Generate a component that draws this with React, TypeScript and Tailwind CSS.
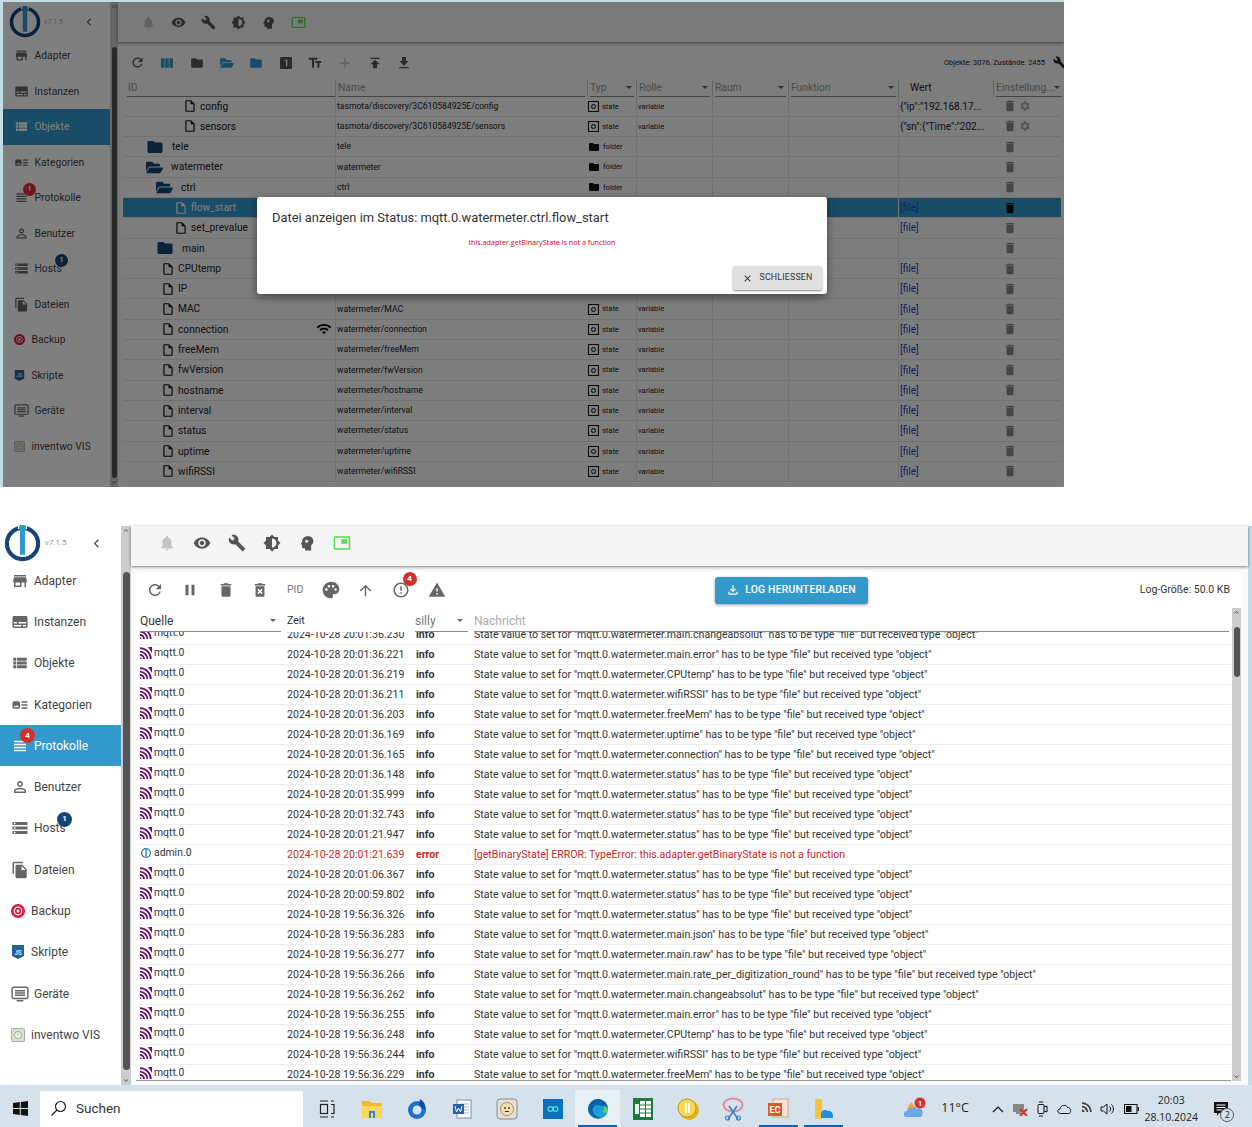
import type { ReactNode } from 'react';
import { FaFolderOpen } from 'react-icons/fa';
import {
  MdAdd, MdArrowUpward, MdArtTrack, MdBrightness6, MdBuild, MdChevronLeft, MdClose, MdDelete, MdDeleteForever,
  MdErrorOutline, MdFileCopy, MdFolder, MdGetApp, MdKeyboardArrowDown, MdKeyboardArrowUp, MdLooksOne,
  MdNotifications, MdOutlineFileDownload, MdOutlineInsertDriveFile, MdPalette, MdPause, MdPersonOutline,
  MdPictureInPicture, MdPublish, MdRefresh, MdSettings, MdStorage, MdStore, MdSubtitles, MdTextFields,
  MdViewColumn, MdViewHeadline, MdViewList, MdVisibility, MdWarning, MdWifi,
} from 'react-icons/md';

/* small drawn icons */

function Logo({ size }: { size: number }) {
  return (
    <svg width={size} height={size} viewBox="0 0 36 36" className="shrink-0">
      <circle cx="18" cy="18" r="15.2" fill="none" stroke="#164477" strokeWidth="4" />
      <rect x="15.5" y="0" width="5" height="29" fill="#3399cc" />
      <rect x="13.5" y="0" width="1.5" height="4" fill="#fff" />
      <rect x="21" y="0" width="1.5" height="4" fill="#fff" />
    </svg>
  );
}

function HeadIcon({ size }: { size: number }) {
  return (
    <svg width={size} height={size} viewBox="0 0 24 24">
      <path d="M13 3 C8.5 3 5.5 6 5.5 10 L3.5 14 H5.5 V17.5 C5.5 18.5 6.5 19 7.5 19 H9.5 V22 H17.5 V15 C19.5 13.5 20.5 11.5 20.5 9.5 C20.5 5.5 17.5 3 13 3 Z" fill="#555" />
      <circle cx="11.5" cy="9.5" r="2" fill="#f5f5f5" />
    </svg>
  );
}

function MqttIcon() {
  return (
    <svg width="12" height="12" viewBox="0 0 12 12" fill="none" stroke="#66106a" strokeWidth="1.8" className="shrink-0">
      <path d="M0 1.2 A11 11 0 0 1 10.8 12" />
      <path d="M0 4.6 A7.5 7.5 0 0 1 7.4 12" />
      <path d="M0 8 A4 4 0 0 1 4 12" />
      <path d="M0 11 L1.2 12" strokeWidth="2" />
      <path d="M8 0 L12 0 L12 6 Z" fill="#66106a" stroke="none" />
    </svg>
  );
}

function AdminIcon() {
  return (
    <svg width="12" height="12" viewBox="0 0 12 12" className="shrink-0">
      <circle cx="6" cy="6" r="4.4" fill="none" stroke="#2e6f9e" strokeWidth="1.3" />
      <rect x="5.2" y="1" width="1.6" height="8.5" fill="#3399cc" />
    </svg>
  );
}

function StateIcon() {
  return (
    <svg width="11" height="11" viewBox="0 0 11 11" className="shrink-0">
      <rect x="0.5" y="0.5" width="10" height="10" fill="none" stroke="#111" />
      <circle cx="5.5" cy="5.5" r="2" fill="none" stroke="#111" />
    </svg>
  );
}

function BackupIcon({ size }: { size: number }) {
  return (
    <svg width={size} height={size} viewBox="0 0 14 14">
      <circle cx="7" cy="7" r="7" fill="#e0173f" />
      <circle cx="7" cy="7" r="3.8" fill="none" stroke="#fff" strokeWidth="1.2" />
      <circle cx="7" cy="7" r="1.5" fill="#fff" />
    </svg>
  );
}

function ScriptIcon({ size }: { size: number }) {
  return (
    <svg width={size} height={size} viewBox="0 0 14 14">
      <path d="M1 0 H13 V11 L7 14 L1 11 Z" fill="#23609c" />
      <text x="7" y="9.5" textAnchor="middle" fontSize="6.5" fontWeight="700" fill="#dbe8f5" fontFamily="Roboto, sans-serif">JS</text>
    </svg>
  );
}

function DeviceIcon({ size }: { size: number }) {
  return (
    <svg width={size} height={size} viewBox="0 0 16 16" fill="none" stroke="#666" strokeWidth="1.3">
      <rect x="1" y="2" width="14" height="10" rx="1.2" />
      <path d="M3.5 5.2 H12.5 M3.5 7.2 H12.5 M3.5 9.2 H12.5 M5 14 H11" />
    </svg>
  );
}

function VisIcon({ size }: { size: number }) {
  return (
    <svg width={size} height={size} viewBox="0 0 14 14">
      <rect x="0.5" y="0.5" width="13" height="13" rx="1" fill="#dcdcdc" stroke="#aaa" />
      <circle cx="7" cy="7" r="3.6" fill="#eef5e4" stroke="#7cb342" strokeWidth="0.8" />
      <rect x="6.6" y="4.6" width="0.8" height="3" fill="#7cb342" />
    </svg>
  );
}

function ScrollTrack({ thumbTop, thumbBottom }: { thumbTop: string; thumbBottom: string }) {
  return (
    <div className="w-full h-full flex flex-col bg-[#cdcdcd]">
      <MdKeyboardArrowUp className="w-full h-[9px] shrink-0 text-[#555]" />
      <div className={`${thumbTop} ${thumbBottom} flex-1 mx-[1.5px] rounded-full bg-[#555]`} />
      <MdKeyboardArrowDown className="w-full h-[9px] shrink-0 text-[#555]" />
    </div>
  );
}

/* sidebar, same items in both shots */

type NavItem = { label: string; icon: (size: number) => ReactNode; tight?: boolean; active?: boolean; badge?: string; badgeNavy?: boolean };

const navItems = (protoBadge: string, activeLabel: string): NavItem[] => [
  { label: 'Adapter', icon: (s) => <MdStore size={s} color="#666" /> },
  { label: 'Instanzen', icon: (s) => <MdSubtitles size={s} color="#666" /> },
  { label: 'Objekte', icon: (s) => <MdViewList size={s} color={activeLabel === 'Objekte' ? '#fff' : '#666'} />, active: activeLabel === 'Objekte' },
  { label: 'Kategorien', icon: (s) => <MdArtTrack size={s} color="#666" /> },
  { label: 'Protokolle', icon: (s) => <MdViewHeadline size={s} color={activeLabel === 'Protokolle' ? '#fff' : '#666'} />, active: activeLabel === 'Protokolle', badge: protoBadge },
  { label: 'Benutzer', icon: (s) => <MdPersonOutline size={s} color="#666" /> },
  { label: 'Hosts', icon: (s) => <MdStorage size={s} color="#666" />, badge: '1', badgeNavy: true },
  { label: 'Dateien', icon: (s) => <MdFileCopy size={s} color="#666" /> },
  { label: 'Backup', icon: (s) => <BackupIcon size={s - 4} />, tight: true },
  { label: 'Skripte', icon: (s) => <ScriptIcon size={s - 4} />, tight: true },
  { label: 'Geräte', icon: (s) => <DeviceIcon size={s} /> },
  { label: 'inventwo VIS', icon: (s) => <VisIcon size={s - 4} />, tight: true },
];

function Sidebar({ compact, protoBadge, activeLabel }: { compact: boolean; protoBadge: string; activeLabel: string }) {
  const iconSize = compact ? 15 : 18;
  return (
    <div className={compact ? 'w-[107px] h-full shrink-0 bg-white' : 'w-[121px] h-full shrink-0 bg-white'}>
      <div className={compact ? 'h-[36px] pt-[4px] flex items-center pl-[6px]' : 'h-[34px] flex items-center pl-[4px]'}>
        <Logo size={compact ? 32 : 37} />
        <span className={compact ? 'ml-[3px] text-[7px] text-[#aaa]' : 'ml-[4px] text-[8px] text-[#999]'}>v7.1.5</span>
        <MdChevronLeft size={compact ? 14 : 17} color="#555" className={compact ? 'ml-[19px]' : 'ml-[21px]'} />
      </div>
      <div>
        {navItems(protoBadge, activeLabel).map((item) => (
          <div
            key={item.label}
            className={`${compact ? 'h-[35.5px] pl-[11px]' : 'h-[41.3px] pl-[11px]'} relative flex items-center ${item.active ? 'bg-[#3399cc] text-white' : 'text-[#444]'}`}
          >
            <span className={item.tight ? (compact ? 'w-[17.5px] shrink-0' : 'w-[20px] shrink-0') : (compact ? 'w-[20.5px] shrink-0' : 'w-[23px] shrink-0')}>
              {item.icon(iconSize)}
            </span>
            <span className={compact ? 'text-[10.3px] whitespace-nowrap' : 'text-[12px] whitespace-nowrap'}>{item.label}</span>
            {item.badge && (
              <span
                className={`absolute flex items-center justify-center rounded-full text-white font-bold ${compact ? 'w-[13px] h-[13px] text-[7px]' : 'w-[15px] h-[15px] text-[8px]'} ${item.badgeNavy ? 'bg-[#164477]' : 'bg-[#d32f2f]'} ${item.badgeNavy ? (compact ? 'left-[52px] top-[3px]' : 'left-[57px] top-[4px]') : (compact ? 'left-[20px] top-[3px]' : 'left-[20px] top-[3px]')}`}
              >
                {item.badge}
              </span>
            )}
          </div>
        ))}
      </div>
    </div>
  );
}

function TopBar({ compact }: { compact: boolean }) {
  const size = compact ? 15 : 18;
  return (
    <div className={`${compact ? 'h-[40px] gap-[15px] pl-[23px]' : 'h-[40px] gap-[17px] pl-[27px] pb-[6px]'} shrink-0 flex items-center bg-[#f5f5f5] shadow-[0_1px_3px_rgba(0,0,0,0.5)]`}>
      <MdNotifications size={size} color="#c4c4c4" />
      <MdVisibility size={size} color="#555" />
      <MdBuild size={size} color="#555" />
      <MdBrightness6 size={size} color="#555" />
      <HeadIcon size={size} />
      <MdPictureInPicture size={size} color="#50e050" />
    </div>
  );
}

/* upper shot: object browser with dialog */

type TreeRow = { id: string; pad: string; kind: 'file' | 'folder' | 'open'; name: string; type: 'state' | 'folder'; value?: string; gear?: boolean; selected?: boolean; wifi?: boolean };

const treeRows: TreeRow[] = [
  { id: 'config', pad: 'pl-[60px]', kind: 'file', name: 'tasmota/discovery/3C610584925E/config', type: 'state', value: '{"ip":"192.168.17...', gear: true },
  { id: 'sensors', pad: 'pl-[60px]', kind: 'file', name: 'tasmota/discovery/3C610584925E/sensors', type: 'state', value: '{"sn":{"Time":"202...', gear: true },
  { id: 'tele', pad: 'pl-[23px]', kind: 'folder', name: 'tele', type: 'folder' },
  { id: 'watermeter', pad: 'pl-[23px]', kind: 'open', name: 'watermeter', type: 'folder' },
  { id: 'ctrl', pad: 'pl-[33px]', kind: 'open', name: 'ctrl', type: 'folder' },
  { id: 'flow_start', pad: 'pl-[51px]', kind: 'file', name: 'watermeter/ctrl/flow_start', type: 'state', value: '[file]', selected: true },
  { id: 'set_prevalue', pad: 'pl-[51px]', kind: 'file', name: 'watermeter/ctrl/set_prevalue', type: 'state', value: '[file]' },
  { id: 'main', pad: 'pl-[33px]', kind: 'folder', name: 'watermeter/main', type: 'folder' },
  { id: 'CPUtemp', pad: 'pl-[38px]', kind: 'file', name: 'watermeter/CPUtemp', type: 'state', value: '[file]' },
  { id: 'IP', pad: 'pl-[38px]', kind: 'file', name: 'watermeter/IP', type: 'state', value: '[file]' },
  { id: 'MAC', pad: 'pl-[38px]', kind: 'file', name: 'watermeter/MAC', type: 'state', value: '[file]' },
  { id: 'connection', pad: 'pl-[38px]', kind: 'file', name: 'watermeter/connection', type: 'state', value: '[file]', wifi: true },
  { id: 'freeMem', pad: 'pl-[38px]', kind: 'file', name: 'watermeter/freeMem', type: 'state', value: '[file]' },
  { id: 'fwVersion', pad: 'pl-[38px]', kind: 'file', name: 'watermeter/fwVersion', type: 'state', value: '[file]' },
  { id: 'hostname', pad: 'pl-[38px]', kind: 'file', name: 'watermeter/hostname', type: 'state', value: '[file]' },
  { id: 'interval', pad: 'pl-[38px]', kind: 'file', name: 'watermeter/interval', type: 'state', value: '[file]' },
  { id: 'status', pad: 'pl-[38px]', kind: 'file', name: 'watermeter/status', type: 'state', value: '[file]' },
  { id: 'uptime', pad: 'pl-[38px]', kind: 'file', name: 'watermeter/uptime', type: 'state', value: '[file]' },
  { id: 'wifiRSSI', pad: 'pl-[38px]', kind: 'file', name: 'watermeter/wifiRSSI', type: 'state', value: '[file]' },
];

function TreeKindIcon({ kind, selected }: { kind: TreeRow['kind']; selected?: boolean }) {
  if (kind === 'folder') return <MdFolder size={18} color="#164477" className="shrink-0" />;
  if (kind === 'open') return <FaFolderOpen size={17} color="#164477" className="shrink-0" />;
  return <MdOutlineInsertDriveFile size={14} color={selected ? '#fff' : '#111'} className="shrink-0" />;
}

function HeadCell({ label, width, dark, noCaret }: { label: string; width: string; dark?: boolean; noCaret?: boolean }) {
  return (
    <div className={`${width} h-full shrink-0 flex items-center border-l border-[#ccc] pl-[2px] pr-[2px]`}>
      <div className={`${dark ? 'pl-[9px] text-[#222]' : 'border-b border-[#888] text-[#999]'} w-full h-full flex items-center justify-between text-[10.3px]`}>
        <span className="whitespace-nowrap">{label}</span>
        {!dark && !noCaret && <span className="w-0 h-0 shrink-0 border-x-[3px] border-t-[3px] border-x-transparent border-t-[#666] mr-[2px]" />}
      </div>
    </div>
  );
}

function ToolSlot({ children }: { children: ReactNode }) {
  return <span className="w-[29.6px] shrink-0 flex justify-center">{children}</span>;
}

function ObjectTree() {
  return (
    <div className="flex-1 min-w-0 flex flex-col bg-[#fafafa]">
      <TopBar compact />
      <div className="h-[33px] mt-[4px] shrink-0 flex items-center pl-[5px] text-[#555]">
        <ToolSlot><MdRefresh size={15} /></ToolSlot>
        <ToolSlot><MdViewColumn size={16} color="#3399cc" /></ToolSlot>
        <ToolSlot><MdFolder size={14} /></ToolSlot>
        <ToolSlot><FaFolderOpen size={14} color="#3399cc" /></ToolSlot>
        <ToolSlot><MdFolder size={14} color="#3399cc" /></ToolSlot>
        <ToolSlot><MdLooksOne size={16} /></ToolSlot>
        <ToolSlot><MdTextFields size={16} /></ToolSlot>
        <ToolSlot><MdAdd size={16} color="#bbb" /></ToolSlot>
        <ToolSlot><MdPublish size={16} /></ToolSlot>
        <ToolSlot><MdGetApp size={16} /></ToolSlot>
        <span className="ml-auto text-[7.5px] text-[#222] mr-[8px]">Objekte: 3076, Zustände: 2455</span>
        <MdBuild size={13} color="#222" className="-mr-[2px]" />
      </div>
      <div className="h-[17.5px] ml-[5px] shrink-0 flex">
        <div className="w-[212px] h-full shrink-0 pl-[4px]">
          <div className="h-full border-b border-[#888] text-[10.3px] text-[#999] flex items-center pl-[1px]">ID</div>
        </div>
        <HeadCell label="Name" width="w-[252px]" noCaret />
        <HeadCell label="Typ" width="w-[49px]" />
        <HeadCell label="Rolle" width="w-[76px]" />
        <HeadCell label="Raum" width="w-[76px]" />
        <HeadCell label="Funktion" width="w-[110px]" />
        <HeadCell label="Wert" width="w-[95px]" dark />
        <HeadCell label="Einstellung..." width="w-[71px]" />
      </div>
      <div className="ml-[5px] mr-[3px] flex-1 min-h-0 overflow-hidden">
        {treeRows.map((row) => (
          <div
            key={row.id}
            className={`h-[20.3px] flex items-center border-b border-[#e4e4e4] ${row.selected ? 'bg-[#3399cc] text-white' : 'text-[#222]'}`}
          >
            <div className={`${row.pad} w-[212px] h-full shrink-0 relative flex items-center ${row.kind === 'file' ? 'gap-[3px]' : 'gap-[8px]'} text-[10.2px]`}>
              <TreeKindIcon kind={row.kind} selected={row.selected} />
              <span>{row.id}</span>
              {row.wifi && <MdWifi size={16} className="absolute right-[3px] text-black" />}
            </div>
            <div className="w-[252px] h-full shrink-0 border-l border-[#e0e0e0] pl-[1px] flex items-center text-[8.6px]">{row.name}</div>
            <div className="w-[49px] h-full shrink-0 pl-[1px] flex items-center gap-[3px] text-[7.5px]">
              {row.type === 'state' ? <StateIcon /> : <MdFolder size={12} color="#111" className="shrink-0" />}
              <span>{row.type}</span>
            </div>
            <div className="w-[76px] h-full shrink-0 border-l border-[#e0e0e0] pl-[1px] flex items-center text-[7.5px]">{row.type === 'state' ? 'variable' : ''}</div>
            <div className="w-[76px] h-full shrink-0 border-l border-[#e0e0e0]" />
            <div className="w-[110px] h-full shrink-0 border-l border-[#e0e0e0]" />
            <div className={`w-[95px] h-full shrink-0 border-l border-[#e0e0e0] pl-[1px] flex items-center text-[10px] ${row.value === '[file]' ? 'text-[#1a3fd0]' : ''}`}>{row.value}</div>
            <div className="flex-1 h-full pl-[10px] flex items-center gap-[2px]">
              <MdDelete size={14} color={row.selected ? '#111' : '#888'} />
              {row.gear && <MdSettings size={12} color="#aaa" />}
            </div>
          </div>
        ))}
      </div>
    </div>
  );
}

function ErrorDialog() {
  return (
    <div className="absolute left-[257px] top-[197px] w-[570px] h-[97px] rounded-[3px] bg-white shadow-[0_3px_8px_rgba(0,0,0,0.45)] flex flex-col">
      <div className="pl-[15px] pt-[12px] text-[12.9px] leading-[18px] text-[#333]">Datei anzeigen im Status: mqtt.0.watermeter.ctrl.flow_start</div>
      <div className="mt-[10px] text-center text-[7.2px] leading-[10px] text-[#d0021b] font-['Open_Sans',sans-serif]">this.adapter.getBinaryState is not a function</div>
      <div className="mt-auto mb-[4px] mr-[5px] ml-auto w-[89px] h-[24px] rounded-[2px] bg-[#e0e0e0] shadow-[0_1px_2px_rgba(0,0,0,0.45)] flex items-center justify-center gap-[6px] text-[8.8px] tracking-[0.2px] text-[#333]">
        <MdClose size={11} />
        SCHLIESSEN
      </div>
    </div>
  );
}

/* lower shot: log view */

type LogRow = [string, string, string];

const m = (key: string) => `State value to set for "mqtt.0.watermeter.${key}" has to be type "file" but received type "object"`;

const logRows: LogRow[] = [
  ['mqtt.0', '2024-10-28 20:01:36.230', m('main.changeabsolut')],
  ['mqtt.0', '2024-10-28 20:01:36.221', m('main.error')],
  ['mqtt.0', '2024-10-28 20:01:36.219', m('CPUtemp')],
  ['mqtt.0', '2024-10-28 20:01:36.211', m('wifiRSSI')],
  ['mqtt.0', '2024-10-28 20:01:36.203', m('freeMem')],
  ['mqtt.0', '2024-10-28 20:01:36.169', m('uptime')],
  ['mqtt.0', '2024-10-28 20:01:36.165', m('connection')],
  ['mqtt.0', '2024-10-28 20:01:36.148', m('status')],
  ['mqtt.0', '2024-10-28 20:01:35.999', m('status')],
  ['mqtt.0', '2024-10-28 20:01:32.743', m('status')],
  ['mqtt.0', '2024-10-28 20:01:21.947', m('status')],
  ['admin.0', '2024-10-28 20:01:21.639', '[getBinaryState] ERROR: TypeError: this.adapter.getBinaryState is not a function'],
  ['mqtt.0', '2024-10-28 20:01:06.367', m('status')],
  ['mqtt.0', '2024-10-28 20:00:59.802', m('status')],
  ['mqtt.0', '2024-10-28 19:56:36.326', m('status')],
  ['mqtt.0', '2024-10-28 19:56:36.283', m('main.json')],
  ['mqtt.0', '2024-10-28 19:56:36.277', m('main.raw')],
  ['mqtt.0', '2024-10-28 19:56:36.266', m('main.rate_per_digitization_round')],
  ['mqtt.0', '2024-10-28 19:56:36.262', m('main.changeabsolut')],
  ['mqtt.0', '2024-10-28 19:56:36.255', m('main.error')],
  ['mqtt.0', '2024-10-28 19:56:36.248', m('CPUtemp')],
  ['mqtt.0', '2024-10-28 19:56:36.244', m('wifiRSSI')],
  ['mqtt.0', '2024-10-28 19:56:36.229', m('freeMem')],
];

function Caret() {
  return <span className="w-0 h-0 border-x-[3.5px] border-t-[3.5px] border-x-transparent border-t-[#666]" />;
}

function LogView() {
  return (
    <div className="flex-1 min-w-0 flex flex-col bg-[#fafafa]">
      <TopBar compact={false} />
      <div className="flex-1 min-h-0 flex flex-col ml-[5px] mr-[7px] mt-[6px] mb-[4px] rounded-t-[3px] bg-white">
        <div className="h-[36px] shrink-0 flex items-center text-[#666]">
          <div className="ml-[10px] w-[35px]"><MdRefresh size={18} /></div>
          <div className="w-[36px]"><MdPause size={18} /></div>
          <div className="w-[34px]"><MdDelete size={18} /></div>
          <div className="w-[36px]"><MdDeleteForever size={18} /></div>
          <div className="w-[34px] text-[10.5px] text-[#777]">PID</div>
          <div className="w-[35.5px]"><MdPalette size={20} /></div>
          <div className="w-[35px]"><MdArrowUpward size={17} /></div>
          <div className="w-[36px] relative">
            <MdErrorOutline size={18} />
            <span className="absolute left-[11px] -top-[9px] w-[14px] h-[14px] rounded-full bg-[#d32f2f] text-white text-[8px] font-bold flex items-center justify-center">4</span>
          </div>
          <MdWarning size={18} />
          <div className="ml-[269px] w-[153px] h-[27px] rounded-[3px] bg-[#3399cc] shadow-[0_1px_3px_rgba(0,0,0,0.4)] text-white text-[10.4px] font-medium tracking-[0.2px] flex items-center justify-center gap-[5px]">
            <MdOutlineFileDownload size={14} />
            LOG HERUNTERLADEN
          </div>
          <span className="ml-auto mr-[11px] text-[10.5px] text-[#333]">Log-Größe: 50.0 KB</span>
        </div>
        <div className="flex-1 min-h-0 flex">
          <div className="flex-1 min-w-0 flex flex-col pl-[4px] border-b border-[#999]">
            <div className="h-[24px] shrink-0 flex items-stretch text-[12px]">
              <div className="w-[141px] pt-[2px] border-b border-[#888] flex items-center justify-between text-[#333] pr-[5px]">
                <span>Quelle</span>
                <Caret />
              </div>
              <div className="w-[134px] pt-[2px] pl-[6px] flex items-center text-[10.5px] text-[#333]">Zeit</div>
              <div className="w-[53px] pt-[2px] border-b border-[#888] flex items-center justify-between pr-[5px] text-[#777]">
                <span>silly</span>
                <Caret />
              </div>
              <div className="ml-[6px] pt-[2px] flex-1 mr-[2px] border-b border-[#888] flex items-center text-[#aaa]">Nachricht</div>
            </div>
            <div className="flex-1 min-h-0 overflow-hidden">
              <div className="-mt-[7px]">
                {logRows.map(([source, time, message], i) => {
                  const isError = source === 'admin.0';
                  return (
                    <div key={i} className={`h-[20px] grid grid-cols-[147px_129px_58px_1fr] items-center border-b-[1.5px] border-[#eeeeee] text-[10.58px] ${isError ? 'text-[#c62828]' : 'text-[#333]'}`}>
                      <div className="flex items-center gap-[2px] text-[10.4px] text-[#333] -mt-[3px]">
                        {isError ? <AdminIcon /> : <MqttIcon />}
                        <span>{source}</span>
                      </div>
                      <span>{time}</span>
                      <span className="font-bold">{isError ? 'error' : 'info'}</span>
                      <span className="whitespace-nowrap">{message}</span>
                    </div>
                  );
                })}
              </div>
            </div>
          </div>
          <div className="w-[9px] ml-[1px] shrink-0">
            <ScrollTrack thumbTop="mt-[10px]" thumbBottom="mb-[395px]" />
          </div>
        </div>
      </div>
    </div>
  );
}

/* taskbar */

function TaskSlot({ children, active, open }: { children: ReactNode; active?: boolean; open?: boolean }) {
  return (
    <div className={`w-[45.2px] h-full relative flex items-center justify-center ${active ? 'bg-[#e8f0f5]' : ''}`}>
      {children}
      {(open || active) && <span className="absolute bottom-0 left-[3px] right-[3px] h-[2px] bg-[#0067c0]" />}
    </div>
  );
}

function Taskbar() {
  return (
    <div className="h-[42px] pt-[5px] shrink-0 flex items-center bg-[#d5e2eb] font-['Open_Sans',sans-serif]">
      <div className="w-[40px] flex justify-center">
        <svg width="15" height="15" viewBox="0 0 15 15" fill="#111">
          <path d="M0 2 L6.8 1 V7.1 H0 Z M7.8 .9 L15 0 V7.1 H7.8 Z M0 8 H6.8 V14 L0 13 Z M7.8 8 H15 V15 L7.8 14.1 Z" />
        </svg>
      </div>
      <div className="w-[263px] h-[36px] bg-white flex items-center pl-[10px] gap-[9px] text-[13.5px] text-[#333] font-['Roboto',sans-serif]">
        <svg width="17" height="17" viewBox="0 0 17 17" fill="none" stroke="#222" strokeWidth="1.2">
          <circle cx="10.5" cy="6.5" r="5" />
          <path d="M7 10 L1.5 15.5" />
        </svg>
        Suchen
      </div>
      <div className="flex h-full ml-[1px]">
        <TaskSlot>
          <svg width="16" height="18" viewBox="0 0 16 18" fill="none" stroke="#222" strokeWidth="1.2">
            <rect x="1.5" y="4.5" width="7" height="9" />
            <path d="M1 1 H9 M1 17 H9 M12 1 H15 M12 4.5 H15 V13.5 H12 M12 17 H15" />
          </svg>
        </TaskSlot>
        <TaskSlot>
          <svg width="20" height="18" viewBox="0 0 20 18">
            <path d="M0 1 H8 L10 3 H20 V16 H0 Z" fill="#f2b92f" />
            <path d="M0 6 H20 V18 H0 Z" fill="#fbd75b" />
            <path d="M7 11 H13 V18 H11 V13 H9 V18 H7 Z" fill="#2b88d8" />
          </svg>
        </TaskSlot>
        <TaskSlot>
          <svg width="20" height="20" viewBox="0 0 20 20">
            <circle cx="10" cy="11" r="9" fill="#1f6fd0" />
            <path d="M13 0 C18 3 19 7 18 11 L12 6 Z" fill="#0a4aa8" />
            <circle cx="10" cy="11" r="4.5" fill="#cfe4fa" />
          </svg>
        </TaskSlot>
        <TaskSlot>
          <svg width="20" height="20" viewBox="0 0 20 20">
            <rect x="5" y="1" width="14" height="18" fill="#fff" stroke="#7a8ca8" />
            <path d="M8 5 H17 M8 8 H17 M8 11 H17 M8 14 H17" stroke="#9fb2d0" />
            <rect x="1" y="5" width="11" height="10" fill="#2b5ea8" />
            <path d="M3 7 L4.5 13 L6.5 9 L8.5 13 L10 7" fill="none" stroke="#fff" strokeWidth="1" />
          </svg>
        </TaskSlot>
        <TaskSlot>
          <svg width="22" height="22" viewBox="0 0 22 22">
            <rect x="1" y="1" width="20" height="20" rx="3" fill="#e4e0d8" stroke="#888" />
            <circle cx="11" cy="11" r="6.5" fill="#f1dfb8" stroke="#a89060" />
            <circle cx="9" cy="10" r="0.9" fill="#333" />
            <circle cx="13" cy="10" r="0.9" fill="#333" />
            <path d="M9 13.5 H13" stroke="#333" />
          </svg>
        </TaskSlot>
        <TaskSlot>
          <svg width="20" height="20" viewBox="0 0 20 20">
            <rect width="20" height="20" fill="#0b6fbf" />
            <circle cx="7.5" cy="10" r="2.4" fill="none" stroke="#4fe3d0" strokeWidth="1.2" />
            <circle cx="12.5" cy="10" r="2.4" fill="none" stroke="#4fe3d0" strokeWidth="1.2" />
          </svg>
        </TaskSlot>
        <TaskSlot active>
          <svg width="22" height="22" viewBox="0 0 22 22">
            <circle cx="11" cy="11" r="10" fill="#1a9fd8" />
            <path d="M1 11 A10 10 0 0 1 21 11 C21 14 17 15 14 14 C18 13 17 7 11 7 C6 7 4 12 7 16 C10 20 14 20 17 18 A10 10 0 0 1 1 11 Z" fill="#0f5fa8" />
            <path d="M21 12 C21 15 17 15.5 14 14 C17 13 17.5 10 15.5 8 C19 8 21 10 21 12 Z" fill="#55d468" />
          </svg>
        </TaskSlot>
        <TaskSlot>
          <svg width="20" height="22" viewBox="0 0 20 22">
            <rect width="20" height="22" fill="#1d7a3d" />
            <rect x="7" y="3" width="11" height="16" fill="#fff" />
            <path d="M7 7 H18 M7 11 H18 M7 15 H18 M12.5 3 V19" stroke="#1d7a3d" />
            <rect x="2" y="6" width="4" height="10" fill="#e6f3ea" />
          </svg>
        </TaskSlot>
        <TaskSlot>
          <svg width="24" height="24" viewBox="0 0 24 24">
            <circle cx="13" cy="13" r="10" fill="#e2b520" />
            <circle cx="11" cy="11" r="9" fill="#f7d758" stroke="#c99a10" />
            <path d="M10 6 V16 M13 6 V16" stroke="#fff" strokeWidth="1.6" />
          </svg>
        </TaskSlot>
        <TaskSlot>
          <svg width="22" height="24" viewBox="0 0 22 24" fill="none">
            <ellipse cx="11" cy="8" rx="9.5" ry="6.5" stroke="#e58aa0" strokeWidth="2" />
            <path d="M6 22 L15 9 M16 22 L7 9" stroke="#3b7cc4" strokeWidth="1.5" />
            <circle cx="5.5" cy="21" r="2" stroke="#3b7cc4" strokeWidth="1.2" />
            <circle cx="16.5" cy="21" r="2" stroke="#3b7cc4" strokeWidth="1.2" />
          </svg>
        </TaskSlot>
        <TaskSlot open>
          <svg width="22" height="22" viewBox="0 0 22 22">
            <rect x="6" y="1" width="15" height="18" fill="#fbe3d8" stroke="#d9a28a" />
            <rect x="1" y="5" width="14" height="13" fill="#e0552a" />
            <text x="8" y="15" textAnchor="middle" fontSize="9" fontWeight="700" fill="#fff" fontFamily="Roboto, sans-serif">EC</text>
          </svg>
        </TaskSlot>
        <TaskSlot open>
          <svg width="20" height="22" viewBox="0 0 20 22">
            <path d="M1 1 H8 V21 H1 Z" fill="#f4c542" />
            <path d="M7 16 C7 12 12 11 13 13 C16 12 19 14 19 18 V20 H7 Z" fill="#1f8fdc" />
          </svg>
        </TaskSlot>
      </div>
      <div className="flex-1 h-full flex items-center">
        <svg width="26" height="24" viewBox="0 0 26 24" className="ml-[57px]">
          <path d="M3 20 C0 20 0 14 4 14 C5 9 12 8 14 12 C19 11 21 15 19 18 C19 20 18 20 17 20 Z" fill="#6aa7e8" />
          <path d="M4 12 L8 5 L12 10 Z" fill="#f4a62a" />
          <circle cx="17" cy="6" r="5.5" fill="#d32f2f" />
          <text x="17" y="9" textAnchor="middle" fontSize="8" fontWeight="700" fill="#fff" fontFamily="Roboto, sans-serif">1</text>
        </svg>
        <span className="ml-[12px] text-[12.5px] text-[#222] w-[33px]">11°C</span>
        <svg width="12" height="8" viewBox="0 0 12 8" fill="none" stroke="#111" strokeWidth="1.2" className="ml-[18px]">
          <path d="M1 7 L6 2 L11 7" />
        </svg>
        <svg width="15" height="14" viewBox="0 0 15 14" className="ml-[9px]">
          <rect x="0" y="2" width="11" height="8" fill="#888" />
          <rect x="3" y="10" width="5" height="2" fill="#888" />
          <path d="M7 7 L14 14 M14 7 L7 14" stroke="#d32f2f" strokeWidth="2" />
        </svg>
        <svg width="11" height="16" viewBox="0 0 11 16" fill="none" stroke="#111" className="ml-[9px]">
          <rect x="1" y="3.5" width="6" height="9" rx="1" />
          <path d="M7 6 L10 5 V11 L7 10 M2 1 H6 M2 15 H6" />
        </svg>
        <svg width="15" height="11" viewBox="0 0 15 11" fill="none" stroke="#111" className="ml-[9px]">
          <path d="M3.5 10.5 C0 10.5 0 6 3 6 C3.5 2 9 1 10.5 4.5 C14 4 15 10.5 11.5 10.5 Z" />
        </svg>
        <MdWifi size={15} color="#444" className="ml-[6px] rotate-45" />
        <svg width="15" height="14" viewBox="0 0 15 14" fill="none" stroke="#111" className="ml-[7px]">
          <path d="M1 5 H3.5 L7 2 V12 L3.5 9 H1 Z M9.5 4.5 C11 6 11 8 9.5 9.5 M11.5 2.5 C14 5 14 9 11.5 11.5" />
        </svg>
        <svg width="15" height="10" viewBox="0 0 15 10" className="ml-[9px]">
          <rect x="0.5" y="0.5" width="12.5" height="9" fill="none" stroke="#111" />
          <rect x="2" y="2" width="5.5" height="6" fill="#111" />
          <rect x="13.5" y="3" width="1.5" height="4" fill="#111" />
        </svg>
        <div className="ml-[4px] w-[56px] flex flex-col items-center text-[10.5px] leading-[17px] text-[#222]">
          <span>20:03</span>
          <span>28.10.2024</span>
        </div>
        <div className="relative ml-[14px]">
          <svg width="16" height="16" viewBox="0 0 16 16">
            <path d="M1 1 H15 V12 H6 L4 15 V12 H1 Z" fill="#111" />
            <path d="M3.5 4 H12.5 M3.5 6.5 H12.5 M3.5 9 H9" stroke="#fff" />
          </svg>
          <span className="absolute left-[7px] top-[7px] w-[14px] h-[14px] rounded-full bg-[#d5e2eb] border border-[#555] text-[9px] text-[#222] flex items-center justify-center">2</span>
        </div>
      </div>
    </div>
  );
}

export default function App() {
  return (
    <div className="w-[1252px] h-[1127px] overflow-hidden bg-white flex flex-col font-['Roboto',sans-serif]">
      {/* upper shot, dimmed behind the dialog */}
      <div className="w-[1064px] h-[487px] shrink-0 bg-[#c5dde2] pl-[3px] pt-[2px]">
        <div className="relative w-full h-full flex overflow-hidden">
          <Sidebar compact protoBadge="1" activeLabel="Objekte" />
          <div className="w-[8px] h-full shrink-0">
            <ScrollTrack thumbTop="mt-[36px]" thumbBottom="mb-0" />
          </div>
          <ObjectTree />
          <div className="absolute inset-0 bg-black/50" />
          <div className="absolute -left-[3px] -top-[2px] w-[1064px] h-[487px]">
            <ErrorDialog />
          </div>
        </div>
      </div>

      {/* lower shot */}
      <div className="mt-[39px] h-[559px] shrink-0 flex bg-[#c5dde2] pr-[4px]">
        <Sidebar compact={false} protoBadge="4" activeLabel="Protokolle" />
        <div className="w-[10px] h-full shrink-0">
          <ScrollTrack thumbTop="mt-[37px]" thumbBottom="mb-[6px]" />
        </div>
        <LogView />
      </div>

      <Taskbar />
    </div>
  );
}
